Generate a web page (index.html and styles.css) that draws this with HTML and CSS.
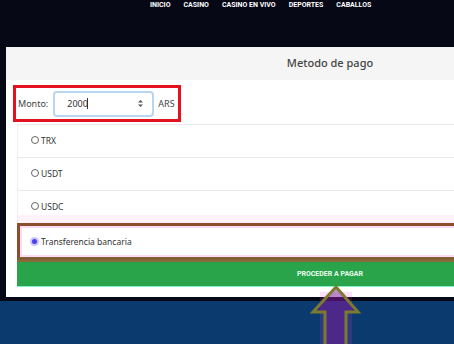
FILE: index.html
```html
<!DOCTYPE html>
<html>
  <head>
    <meta charset="UTF-8">
    <meta name="viewport" content="width=device-width,initial-scale=1">
    <link rel="stylesheet" href="styles.css">
    <title>Metodo de pago</title>
  </head>
  <body>
    <div id="page">
      <div id="header">
        <a href="#">INICIO</a>
        <a href="#">CASINO</a>
        <a href="#">CASINO EN VIVO</a>
        <a href="#">DEPORTES</a>
        <a href="#">CABALLOS</a>
      </div>
      <div class="modal">
        <div class="modal-header">Metodo de pago</div>
        <div class="modal-body">
          <div class="amount-box">
            <label for="monto">Monto:</label>
            <div class="amount-input">
              <input type="text" id="monto" value="2000">
              <span class="caret"></span>
              <svg class="spinner" width="7" height="9" viewBox="0 0 7 9">
                <path d="M1 3.5 L3.5 1 L6 3.5 Z" fill="#555"/>
                <path d="M1 5.5 L3.5 8 L6 5.5 Z" fill="#555"/>
              </svg>
            </div>
            <span class="currency">ARS</span>
          </div>
          <div class="methods">
            <label class="method"><input type="radio" name="method"> TRX</label>
            <label class="method"><input type="radio" name="method"> USDT</label>
            <label class="method method-last"><input type="radio" name="method"> USDC</label>
            <label class="method method-selected"><input type="radio" name="method" checked> Transferencia bancaria</label>
            <button class="pay-button">PROCEDER A PAGAR</button>
          </div>
        </div>
      </div>
      <div class="footer-band"></div>
      <svg class="arrow" width="60" height="64" viewBox="0 0 60 64">
        <rect x="14" y="7" width="32" height="57" fill="rgba(230,60,220,0.16)"/>
        <path d="M30 2 L52 27 L40 27 L40 61 L19 61 L19 27 L7 27 Z" fill="rgba(110,20,150,0.45)" stroke="#7c7a2e" stroke-width="3" stroke-linejoin="miter"/>
      </svg>
    </div>
  </body>
</html>
```
FILE: styles.css
```css
body {
  background-color: #060816;
  margin: 0;
  padding: 0;
  font-family: "Noto Sans", sans-serif;
  overflow: hidden
}

#page {
  position: relative;
  width: 454px;
  height: 344px;
  overflow: hidden
}

#header {
  height: 47px;
  display: flex;
  gap: 13px;
  padding-left: 150px;
  box-sizing: border-box
}

#header a {
  color: #fff;
  text-decoration: none;
  font-family: Roboto, sans-serif;
  font-weight: 700;
  font-size: 7px;
  line-height: 11px;
  white-space: nowrap
}

.modal {
  margin-left: 6px;
  width: 648px;
  height: 250px;
  background-color: #fff;
  box-sizing: border-box
}

.modal-header {
  height: 33px;
  background-color: #f5f5f5;
  color: #444;
  font-size: 11px;
  font-weight: 500;
  text-align: center;
  line-height: 31px
}

.modal-body {
  padding: 5px 0 0 7px
}

.amount-box {
  display: inline-flex;
  align-items: center;
  height: 37px;
  width: 168px;
  box-sizing: border-box;
  border: 3px solid #e3121e;
  padding: 0 2px;
  font-size: 9px;
  color: #444
}

.amount-input {
  display: flex;
  align-items: center;
  margin: 0 4px 0 5px;
  width: 101px;
  height: 26px;
  box-sizing: border-box;
  border: 2px solid #b9d5f1;
  border-radius: 4px;
  padding: 0 8px 0 12px
}

.amount-input input {
  border: none;
  outline: none;
  width: 20px;
  padding: 0;
  font-family: "Noto Sans", sans-serif;
  font-size: 9px;
  color: #333;
  background: none
}

.caret {
  width: 1px;
  height: 11px;
  background-color: #333
}

.spinner {
  margin-left: auto
}

.methods {
  margin: 2px 11px 0 4px
}

.method {
  display: flex;
  align-items: center;
  gap: 2px;
  height: 33px;
  box-sizing: border-box;
  border-left: 1px solid #eee;
  border-top: 1px solid #eaeaea;
  padding: 0 0 2px 13px;
  font-size: 8.5px;
  color: #333
}

.method-last {
  background: linear-gradient(#fff 0, #fff 24px, #fff2fb 24px)
}

.method input {
  appearance: none;
  margin: 0;
  width: 8px;
  height: 8px;
  border: 1px solid #666;
  border-radius: 50%;
  box-sizing: border-box
}

.method-selected {
  height: 37px;
  border: 3px solid #8a4e2c;
  border-bottom-color: #826036;
  box-shadow: inset 0 0 0 2px #ffdcf4;
  padding: 0 0 0 10px
}

.method-selected input {
  border: 2px solid #c8c6ff;
  background-color: #4a3ff0;
  width: 9px;
  height: 9px
}

.pay-button {
  display: block;
  width: 100%;
  height: 27px;
  margin-top: 0;
  border: none;
  border-top: 2px solid #8a6a3a;
  border-bottom: 1px solid #7ff0d0;
  background-color: #2aa44a;
  color: #eafff0;
  font-family: Roboto, sans-serif;
  font-weight: 700;
  font-size: 7px;
  padding: 0
}

.footer-band {
  margin-top: 4px;
  height: 50px;
  background-color: #0b3a6e
}

.arrow {
  position: absolute;
  left: 306px;
  top: 285px
}
```
